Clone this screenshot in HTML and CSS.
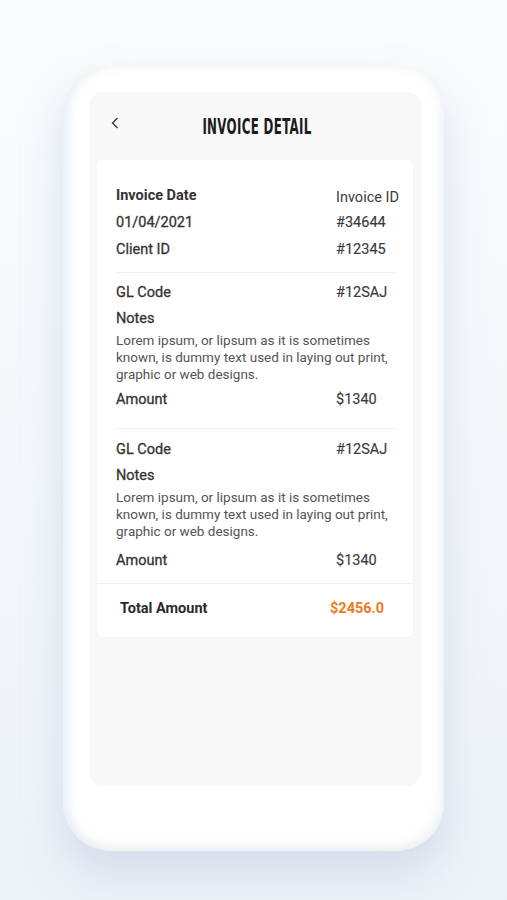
FILE: index.html
```html
<!DOCTYPE html>
<html lang="en">
<head>
    <meta charset="UTF-8">
    <meta name="viewport" content="width=device-width, initial-scale=1.0">
    <title>Invoice Detail</title>
    <link rel="stylesheet" href="styles.css">
</head>
<body>
    <div class="phone">
        <div class="screen">
            <div class="header">
                <svg class="back" width="8" height="12" viewBox="0 0 8 12">
                    <polyline points="6.5,1 1.5,6 6.5,11" fill="none" stroke="#333" stroke-width="1.3"/>
                </svg>
                <h1 class="title">INVOICE DETAIL</h1>
            </div>
            <div class="card">
                <div class="section first">
                    <div class="row"><span class="label strong">Invoice Date</span><span class="value id">Invoice ID</span></div>
                    <div class="row"><span class="label">01/04/2021</span><span class="value">#34644</span></div>
                    <div class="row"><span class="label">Client ID</span><span class="value">#12345</span></div>
                </div>
                <div class="section">
                    <div class="row"><span class="label">GL Code</span><span class="value">#12SAJ</span></div>
                    <div class="row"><span class="label">Notes</span></div>
                    <p class="notes">Lorem ipsum, or lipsum as it is sometimes known, is dummy text used in laying out print, graphic or web designs.</p>
                    <div class="row amount"><span class="label">Amount</span><span class="value">$1340</span></div>
                </div>
                <div class="section last">
                    <div class="row"><span class="label">GL Code</span><span class="value">#12SAJ</span></div>
                    <div class="row"><span class="label">Notes</span></div>
                    <p class="notes">Lorem ipsum, or lipsum as it is sometimes known, is dummy text used in laying out print, graphic or web designs.</p>
                    <div class="row amount"><span class="label">Amount</span><span class="value">$1340</span></div>
                </div>
                <div class="total">
                    <span>Total Amount</span>
                    <span class="total-value">$2456.0</span>
                </div>
            </div>
        </div>
    </div>
</body>
</html>
```

FILE: styles.css
```css
body {
    margin: 0;
    padding: 0;
    height: 900px;
    font-family: 'Roboto', 'Noto Sans', sans-serif;
    color: #383838;
    background: linear-gradient(#fafbfd, #f3f6fa 60%, #edf2f8);
    overflow: hidden;
}
.phone {
    width: 381px;
    height: 785px;
    margin: 66px auto 0;
    padding: 26px 23px 0 26px;
    box-sizing: border-box;
    background: #fff;
    border-radius: 48px;
    box-shadow: 0 22px 40px rgba(160, 180, 210, 0.35),
                inset 7px 0 10px rgba(215, 225, 235, 0.45),
                inset -5px -6px 10px rgba(215, 225, 235, 0.35);
}
.screen {
    height: 694px;
    background: #f8f8f8;
    border-radius: 14px;
    padding: 0 8px;
}
.header {
    height: 68px;
    display: flex;
    align-items: center;
    justify-content: center;
    position: relative;
}
.back {
    position: absolute;
    left: 14px;
    top: 25px;
}
.title {
    margin: 0 0 0 4px;
    font-family: 'DejaVu Sans Condensed', 'DejaVu Sans', sans-serif;
    font-weight: bold;
    font-size: 22px;
    color: #1c1c1c;
    display: inline-block;
    transform: scaleX(0.6);
    letter-spacing: 0.5px;
}
.card {
    background: #fff;
    border-radius: 6px;
    box-shadow: 0 1px 2px rgba(0, 0, 0, 0.03);
}
.section {
    margin: 0 16px 0 19px;
    padding: 7px 0 15px;
    border-bottom: 1px solid #f0f0f0;
}
.section.first {
    padding: 22px 0 9px;
}
.section.last {
    margin: 0;
    padding: 8px 16px 9px 19px;
}
.row {
    display: grid;
    grid-template-columns: 220px 1fr;
    line-height: 26px;
    font-size: 14.5px;
}
.section.first .row {
    line-height: 27px;
}
.label {
    color: #333;
    -webkit-text-stroke: 0.3px #333;
}
.label.strong {
    font-weight: bold;
    -webkit-text-stroke: 0;
}
.value {
    color: #3a3a3a;
    white-space: nowrap;
    -webkit-text-stroke: 0.15px #3a3a3a;
}
.value.id {
    position: relative;
    top: 2px;
    -webkit-text-stroke: 0;
}
.notes {
    margin: 0;
    font-size: 13.5px;
    line-height: 17px;
    color: #555;
}
.amount {
    margin-top: 4px;
}
.section.last .amount {
    margin-top: 8px;
}
.total {
    display: grid;
    grid-template-columns: 210px 1fr;
    padding: 0 0 4px 23px;
    height: 53px;
    box-sizing: border-box;
    align-items: center;
    font-size: 14.5px;
    font-weight: bold;
    color: #2a2a2a;
}
.total-value {
    color: #f07a20;
}
```
